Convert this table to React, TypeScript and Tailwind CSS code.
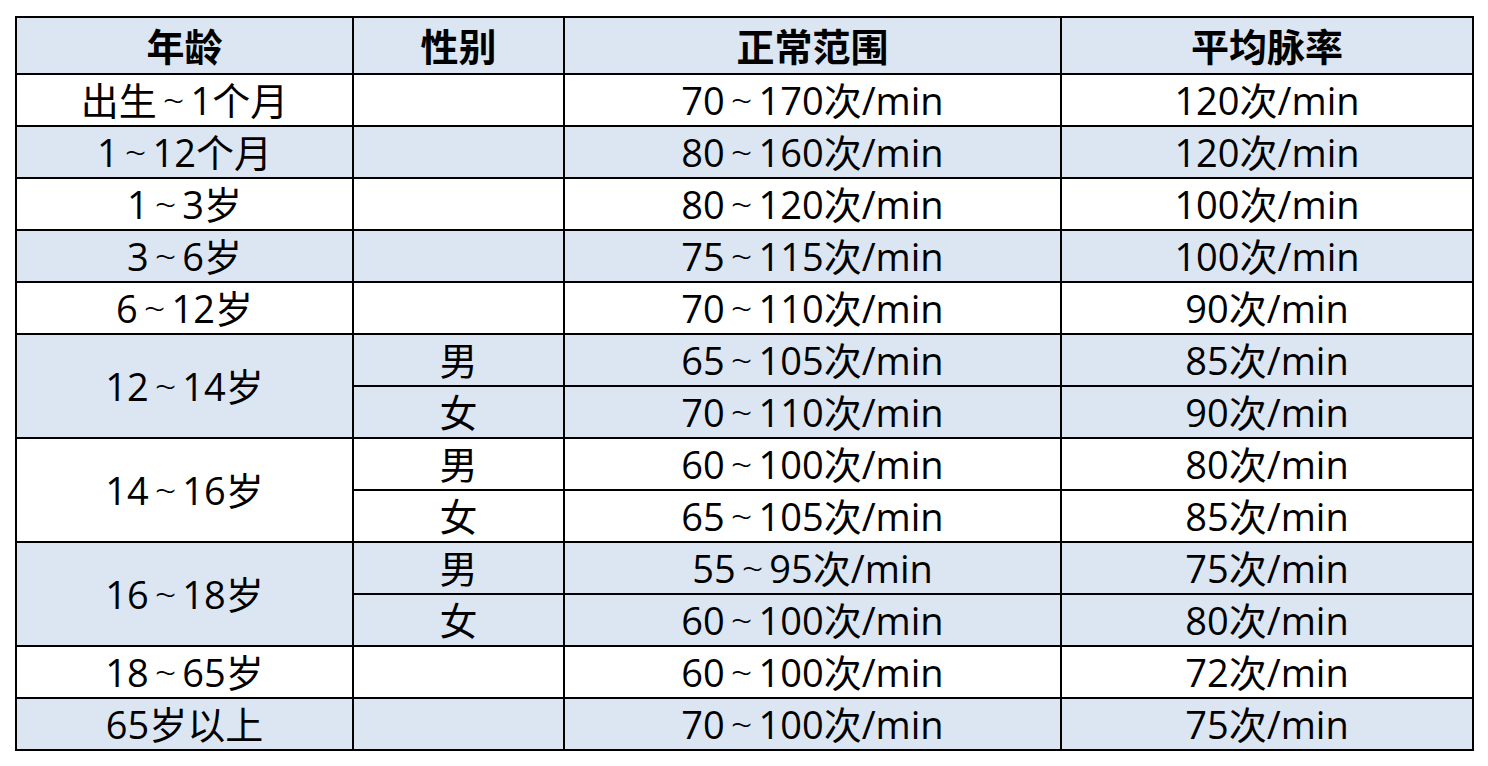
import React from 'react';

type Row = {
  age: string;
  sex?: string;
  range: string;
  avg: string;
  span?: number;
  blue: boolean;
};

const rows: Row[] = [
  { age: '出生~1个月', range: '70~170次/min', avg: '120次/min', blue: false },
  { age: '1~12个月', range: '80~160次/min', avg: '120次/min', blue: true },
  { age: '1~3岁', range: '80~120次/min', avg: '100次/min', blue: false },
  { age: '3~6岁', range: '75~115次/min', avg: '100次/min', blue: true },
  { age: '6~12岁', range: '70~110次/min', avg: '90次/min', blue: false },
  { age: '12~14岁', sex: '男', range: '65~105次/min', avg: '85次/min', span: 2, blue: true },
  { age: '', sex: '女', range: '70~110次/min', avg: '90次/min', span: 0, blue: true },
  { age: '14~16岁', sex: '男', range: '60~100次/min', avg: '80次/min', span: 2, blue: false },
  { age: '', sex: '女', range: '65~105次/min', avg: '85次/min', span: 0, blue: false },
  { age: '16~18岁', sex: '男', range: '55~95次/min', avg: '75次/min', span: 2, blue: true },
  { age: '', sex: '女', range: '60~100次/min', avg: '80次/min', span: 0, blue: true },
  { age: '18~65岁', range: '60~100次/min', avg: '72次/min', blue: false },
  { age: '65岁以上', range: '70~100次/min', avg: '75次/min', blue: true },
];

const cell = 'border-2 border-black text-center p-0 leading-none';

// tilde with a bit of air on both sides, like the original sheet font
function Txt({ s }: { s: string }) {
  const parts = s.split('~');
  if (parts.length < 2) return <>{s}</>;
  return (
    <>
      {parts[0]}
      <span className="inline-block mx-[6px] font-light">~</span>
      {parts[1]}
    </>
  );
}

export default function App() {
  return (
    <div
      className="w-[1488px] h-[766px] bg-white pt-[16px] pl-[15px] text-black"
      style={{ fontFamily: '"Open Sans", "Noto Sans CJK SC", sans-serif' }}
    >
      <table className="border-collapse table-fixed w-[1457px] text-[38px]">
        <colgroup>
          <col className="w-[337px]" />
          <col className="w-[211px]" />
          <col className="w-[497px]" />
          <col className="w-[412px]" />
        </colgroup>
        <thead>
          <tr className="h-[57px] bg-[#dce6f2] font-black text-[38px]">
            <th className={cell}>年龄</th>
            <th className={cell}>性别</th>
            <th className={cell}>正常范围</th>
            <th className={cell}>平均脉率</th>
          </tr>
        </thead>
        <tbody>
          {rows.map((r, i) => (
            <tr key={i} className={`h-[52px] ${r.blue ? 'bg-[#dce6f2]' : 'bg-white'}`}>
              {r.span !== 0 && (
                <td className={cell} rowSpan={r.span ?? 1}>
                  <Txt s={r.age} />
                </td>
              )}
              <td className={cell}>{r.sex ?? ''}</td>
              <td className={cell}>
                <Txt s={r.range} />
              </td>
              <td className={cell}>{r.avg}</td>
            </tr>
          ))}
        </tbody>
      </table>
    </div>
  );
}
